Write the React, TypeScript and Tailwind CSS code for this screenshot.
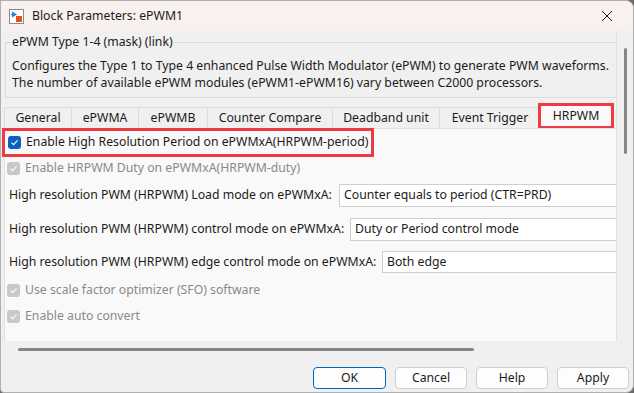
import React from "react";

function Check({ disabled }: { disabled?: boolean }) {
  return (
    <span
      className={
        "inline-flex items-center justify-center w-[13px] h-[13px] rounded-[3px] shrink-0 " +
        (disabled ? "bg-[#c8c8c8]" : "bg-[#0a60c0]")
      }
    >
      <svg width="9" height="9" viewBox="0 0 9 9">
        <path d="M1.5 4.6 L3.6 6.6 L7.6 2.4" fill="none" stroke="#ffffff" strokeWidth="1.1" />
      </svg>
    </span>
  );
}

const tabs = [
  { name: "General", w: 67 },
  { name: "ePWMA", w: 67 },
  { name: "ePWMB", w: 69 },
  { name: "Counter Compare", w: 125 },
  { name: "Deadband unit", w: 107 },
  { name: "Event Trigger", w: 101 },
];

export default function App() {
  return (
    <div className="w-[634px] h-[393px] overflow-hidden bg-[#6b6b6b] font-['Segoe_UI','Noto_Sans',sans-serif] text-[12.25px] text-[#1b1b1b]">
      <div className="w-[634px] h-[393px] flex flex-col bg-[#f0f0f0] border border-[#b0b0b0] rounded-tr-[8px] rounded-br-[8px] rounded-bl-[4px] overflow-hidden">
        {/* title bar */}
        <div className="h-[30px] shrink-0 bg-[#f8f1ef] flex items-center pl-[8px] pr-[20px]">
          <svg width="15" height="15" viewBox="0 0 15 15" className="shrink-0">
            <rect x="0.5" y="0.5" width="14" height="14" fill="#ffffff" stroke="#8c8c8c" />
            <path d="M3 2.5 L3 8.5 L8 5.5 Z" fill="#2a7fd0" />
            <path d="M2 5.5 L3 5.5" stroke="#2a7fd0" />
            <rect x="7" y="7" width="6" height="6" fill="#e0561c" />
          </svg>
          <span className="ml-[8px] leading-none">Block Parameters: ePWM1</span>
          <div className="flex-1" />
          <svg width="12" height="12" viewBox="0 0 12 12">
            <path d="M1 1 L11 11 M11 1 L1 11" stroke="#1b1b1b" strokeWidth="1" />
          </svg>
        </div>

        {/* middle */}
        <div className="h-[310px] shrink-0 flex">
          <div className="flex-1 min-w-0 flex flex-col">
            <fieldset className="mt-[3px] ml-[4px] h-[64px] border border-[#dadada] border-r-0 pl-[6px] pt-[8px]">
              <legend className="px-[1px] -ml-[1px] leading-[16px]">ePWM Type 1-4 (mask) (link)</legend>
              <div className="leading-[17px] whitespace-nowrap -mt-[1px]">
                Configures the Type 1 to Type 4 enhanced Pulse Width Modulator (ePWM) to generate PWM waveforms.
              </div>
              <div className="leading-[17px] whitespace-nowrap">
                The number of available ePWM modules (ePWM1-ePWM16) vary between C2000 processors.
              </div>
            </fieldset>

            {/* tabs */}
            <div className="mt-[9px] ml-[3px] h-[21px] flex">
              {tabs.map((t) => (
                <div
                  key={t.name}
                  style={{ width: t.w }}
                  className="h-[21px] shrink-0 flex items-center justify-center border-t border-l border-[#dcdcdc] bg-[#f0f0f0] whitespace-nowrap"
                >
                  {t.name}
                </div>
              ))}
              <div className="w-[76px] h-[26px] shrink-0 -mt-[4px] -ml-[2px] flex items-center justify-center border-[3px] border-[#ec3b42] bg-[#f9f9f9] pt-[1px]">
                HRPWM
              </div>
            </div>

            {/* panel */}
            <div className="ml-[3px] flex-1 bg-[#f9f9f9] border-t border-l border-[#e0e0e0] flex flex-col">
              <div className="-ml-[3px] -mt-[1px] w-[372px] h-[29px] border-[3px] border-[#ec3b42] flex items-center pl-[3px] gap-[5px]">
                <Check />
                <span className="whitespace-nowrap">Enable High Resolution Period on ePWMxA(HRPWM-period)</span>
              </div>
              <div className="h-[23px] flex items-center pl-[2px] gap-[5px] text-[#8a8a8a]">
                <Check disabled />
                <span className="whitespace-nowrap">Enable HRPWM Duty on ePWMxA(HRPWM-duty)</span>
              </div>
              <div className="mt-[4px] h-[23px] flex items-center">
                <span className="w-[334px] pl-[4px] whitespace-nowrap shrink-0">High resolution PWM (HRPWM) Load mode on ePWMxA:</span>
                <div className="flex-1 h-[23px] bg-white border border-r-0 border-[#cfcfcf] flex items-center pl-[4px] whitespace-nowrap">
                  Counter equals to period (CTR=PRD)
                </div>
              </div>
              <div className="mt-[11px] h-[23px] flex items-center">
                <span className="w-[345px] pl-[4px] whitespace-nowrap shrink-0">High resolution PWM (HRPWM) control mode on ePWMxA:</span>
                <div className="flex-1 h-[23px] bg-white border border-r-0 border-[#cfcfcf] flex items-center pl-[4px] whitespace-nowrap">
                  Duty or Period control mode
                </div>
              </div>
              <div className="mt-[10px] h-[22px] flex items-center">
                <span className="w-[377px] pl-[4px] whitespace-nowrap shrink-0">High resolution PWM (HRPWM) edge control mode on ePWMxA:</span>
                <div className="flex-1 h-[22px] bg-white border border-r-0 border-[#cfcfcf] flex items-center pl-[4px] whitespace-nowrap">
                  Both edge
                </div>
              </div>
              <div className="mt-[6px] h-[23px] flex items-center pl-[2px] gap-[5px] text-[#8a8a8a]">
                <Check disabled />
                <span className="whitespace-nowrap">Use scale factor optimizer (SFO) software</span>
              </div>
              <div className="mt-[3px] h-[23px] flex items-center pl-[2px] gap-[5px] text-[#8a8a8a]">
                <Check disabled />
                <span className="whitespace-nowrap">Enable auto convert</span>
              </div>
            </div>
          </div>
          {/* vertical scrollbar */}
          <div className="w-[17px] shrink-0 border-l border-[#e2e2e2] bg-[#f0f0f0] flex justify-center pt-[17px]">
            <div className="w-[3px] h-[106px] bg-[#868686] rounded-full" />
          </div>
        </div>

        {/* horizontal scrollbar */}
        <div className="h-[26px] shrink-0 pl-[17px] pt-[7px]">
          <div className="w-[456px] h-[3px] bg-[#868686] rounded-full" />
        </div>

        {/* buttons */}
        <div className="flex justify-end gap-[9px] pr-[4px]">
          <button className="w-[73px] h-[22px] rounded-[4px] border border-[#0067c0] bg-[#fdfdfd] leading-none">OK</button>
          <button className="w-[72px] h-[22px] rounded-[4px] border border-[#d0d0d0] bg-[#fdfdfd] leading-none">Cancel</button>
          <button className="w-[72px] h-[22px] rounded-[4px] border border-[#d0d0d0] bg-[#fdfdfd] leading-none">Help</button>
          <button className="w-[72px] h-[22px] rounded-[4px] border border-[#d0d0d0] bg-[#fdfdfd] leading-none">Apply</button>
        </div>
      </div>
    </div>
  );
}
